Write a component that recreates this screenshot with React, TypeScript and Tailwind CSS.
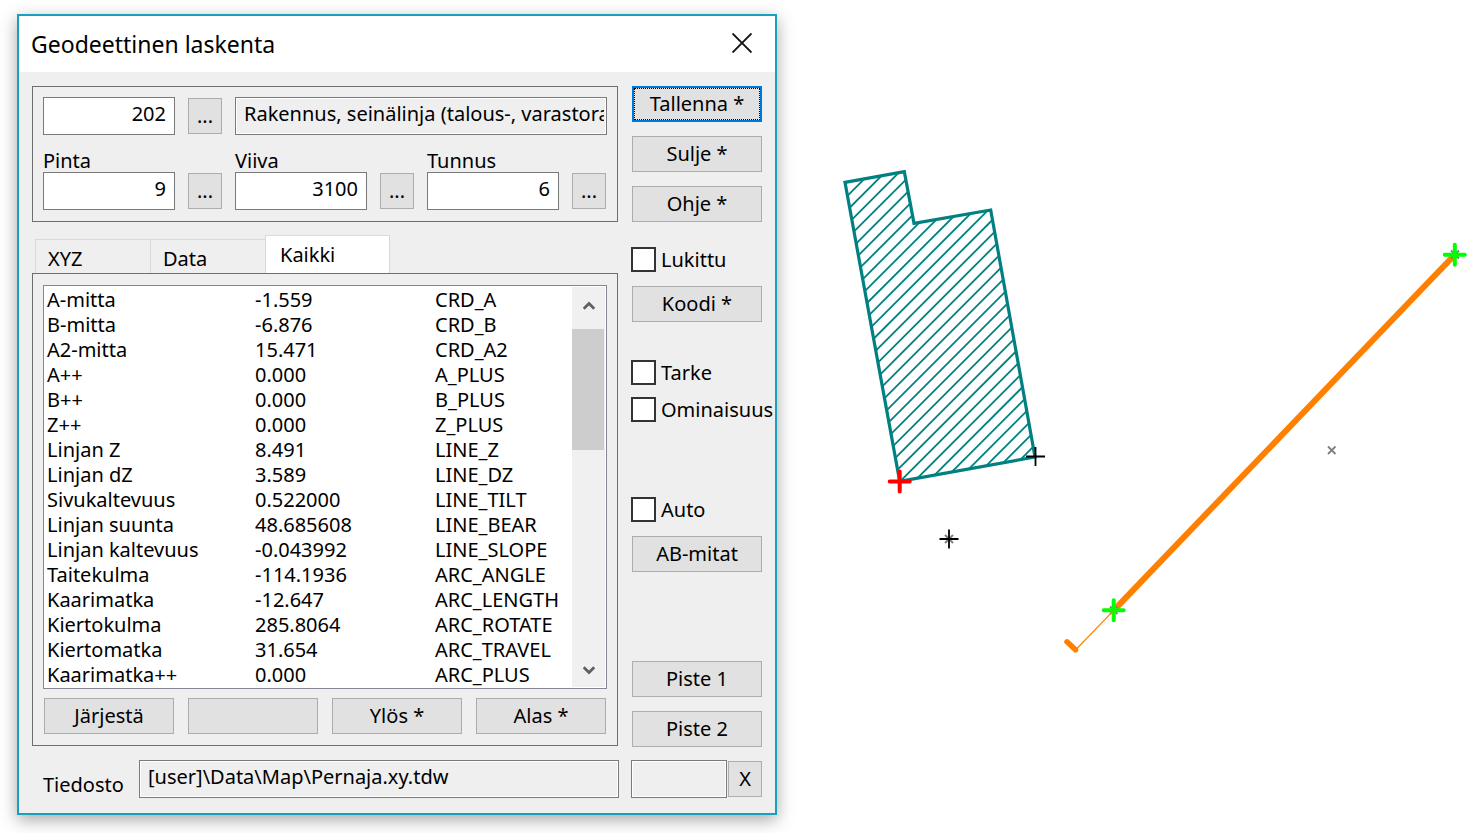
import { useState } from "react";
import type { ReactNode } from "react";

const ROWS: [string, string, string][] = [
  ["A-mitta", "-1.559", "CRD_A"],
  ["B-mitta", "-6.876", "CRD_B"],
  ["A2-mitta", "15.471", "CRD_A2"],
  ["A++", "0.000", "A_PLUS"],
  ["B++", "0.000", "B_PLUS"],
  ["Z++", "0.000", "Z_PLUS"],
  ["Linjan Z", "8.491", "LINE_Z"],
  ["Linjan dZ", "3.589", "LINE_DZ"],
  ["Sivukaltevuus", "0.522000", "LINE_TILT"],
  ["Linjan suunta", "48.685608", "LINE_BEAR"],
  ["Linjan kaltevuus", "-0.043992", "LINE_SLOPE"],
  ["Taitekulma", "-114.1936", "ARC_ANGLE"],
  ["Kaarimatka", "-12.647", "ARC_LENGTH"],
  ["Kiertokulma", "285.8064", "ARC_ROTATE"],
  ["Kiertomatka", "31.654", "ARC_TRAVEL"],
  ["Kaarimatka++", "0.000", "ARC_PLUS"],
];

function PushButton({ children, label, primary }: { children?: ReactNode; label?: string; primary?: boolean }) {
  return (
    <button
      type="button"
      aria-label={label}
      className={
        primary
          ? "h-9 w-full border-2 border-[#0078d7] bg-[#e1e1e1] leading-6 outline-1 -outline-offset-3 outline-dotted outline-black"
          : "h-9 w-full border border-[#adadad] bg-[#e1e1e1] leading-6"
      }
    >
      {children}
    </button>
  );
}

function SmallButton({ children, label }: { children: ReactNode; label: string }) {
  return (
    <button
      type="button"
      aria-label={label}
      className="h-9 w-[34px] shrink-0 border border-[#adadad] bg-[#e1e1e1] leading-6"
    >
      {children}
    </button>
  );
}

function NumberBox({ id, value, label }: { id: string; value: string; label?: string }) {
  return (
    <input
      id={id}
      aria-label={label}
      defaultValue={value}
      className="h-[38px] w-[132px] min-w-0 border border-[#7a7a7a] bg-white px-2 pb-1.5 text-right outline-none"
    />
  );
}

function Field({ id, title, value }: { id: string; title: string; value: string }) {
  return (
    <div>
      <label htmlFor={id} className="block leading-[23px]">
        {title}
      </label>
      <div className="flex items-center gap-[13px]">
        <NumberBox id={id} value={value} />
        <SmallButton label={`${title} valinta`}>...</SmallButton>
      </div>
    </div>
  );
}

function Check({ children }: { children: ReactNode }) {
  return (
    <label className="-ml-px flex h-[25px] items-center gap-[5px] whitespace-nowrap leading-[27px]">
      <input
        type="checkbox"
        className="size-[25px] shrink-0 appearance-none border-2 border-[#333333] bg-white checked:bg-[#333333]"
      />
      {children}
    </label>
  );
}

function Chevron({ down }: { down?: boolean }) {
  return (
    <svg viewBox="0 0 12 9" className="h-[9px] w-3" fill="none" stroke="#606060" strokeWidth="2.8">
      <path d={down ? "M0.7 1.3 6 6.6l5.3-5.3" : "M0.7 7.7 6 2.4l5.3 5.3"} />
    </svg>
  );
}

const HATCH_COUNT = 32;
const BUILDING = "845,182.3 904.3,171.7 914,223.4 990.7,210 1035,457 899.7,481.3";

function MapView() {
  const hatch = Array.from({ length: HATCH_COUNT }, (_, i) => 1043.3 + i * 14.09);
  return (
    <svg viewBox="777 0 703 833" className="block h-auto w-full" fill="none" role="img" aria-label="Kartta">
      <defs>
        <clipPath id="building">
          <polygon points={BUILDING} />
        </clipPath>
      </defs>
      <g clipPath="url(#building)" stroke="#008080" strokeWidth="1.8">
        {hatch.map((c) => (
          <line key={c} x1={c - 500} y1={500} x2={c - 160} y2={160} />
        ))}
      </g>
      <polygon points={BUILDING} stroke="#008080" strokeWidth="3.2" />
      <path d="M899.7 471.5v20M889.7 481.5h20" stroke="#ff0000" strokeWidth="4" strokeLinecap="round" />
      <path d="M1035.5 447v19M1026 456.5h19" stroke="#000" strokeWidth="1.8" />
      <path d="M945 535l8 8m0-8l-8 8" stroke="#808080" strokeWidth="2" />
      <path d="M949 529.5v19M939.5 539h19" stroke="#000" strokeWidth="1.8" />

      <path d="M1328 446.5l7.5 7.5m0-7.5l-7.5 7.5" stroke="#808080" strokeWidth="1.8" />
      <path d="M1113.7 610.3 1455 254.5" stroke="#ff8000" strokeWidth="6" />
      <path d="M1067 641.8l8.5 8" stroke="#ff8000" strokeWidth="5.5" strokeLinecap="round" />
      <path d="M1110 606.5l7.5 7.5m0-7.5l-7.5 7.5M1451 250.5l8 8m0-8l-8 8" stroke="#808080" strokeWidth="1.8" />
      <g stroke="#00ff00" strokeWidth="4" strokeLinecap="round">
        <path d="M1113.7 600.3v20M1103.7 610.3h20" />
        <path d="M1454.8 244.7v20M1444.8 254.7h20" />
      </g>
      <path d="M1113.7 610.3 1076 649.5" stroke="#ff8000" strokeWidth="1.2" />
    </svg>
  );
}

const TABS = ["XYZ", "Data", "Kaikki"];

export default function App() {
  const [tab, setTab] = useState("Kaikki");

  return (
    <div className="flex min-h-screen items-start bg-white font-['Noto_Sans',sans-serif] text-[20px] text-black">
      <main className="mt-3.5 ml-[17px] flex w-[760px] shrink-0 flex-col border-2 border-[#1a9fbd] bg-[#efefef] shadow-[0_5px_16px_rgba(0,0,0,0.35)]">
        <header className="flex h-14 items-center justify-between bg-white pr-[21px] pb-0.5 pl-3">
          <h1 className="pt-0.5 text-[23px] leading-8">Geodeettinen laskenta</h1>
          <button type="button" aria-label="Sulje ikkuna" className="grid size-6 place-items-center">
            <svg viewBox="0 0 20 20" className="size-5" stroke="#111" strokeWidth="1.9">
              <path d="M0.5 0.5l19 19M19.5 0.5l-19 19" />
            </svg>
          </button>
        </header>

        <div className="flex flex-col gap-3.5 px-[13px] pt-3.5 pb-[15px]">
          <div className="flex items-start gap-3.5">
            <div className="flex flex-1 flex-col">
              <section className="border border-[#6e6e6e] px-2.5 pt-2.5 pb-[11px]">
                <div className="flex items-center gap-[13px]">
                  <NumberBox id="laji" value="202" label="Laji" />
                  <SmallButton label="Lajin valinta">...</SmallButton>
                  <input
                    readOnly
                    aria-label="Lajin nimi"
                    value="Rakennus, seinälinja (talous-, varastorakennus)"
                    className="h-[38px] min-w-0 flex-1 border border-[#7a7a7a] bg-[#efefef] pr-0.5 pb-1.5 pl-2 shadow-[inset_0_0_0_1px_#fff] outline-none"
                  />
                </div>
                <div className="mt-3.5 flex gap-[13px]">
                  <Field id="pinta" title="Pinta" value="9" />
                  <Field id="viiva" title="Viiva" value="3100" />
                  <Field id="tunnus" title="Tunnus" value="6" />
                </div>
              </section>

              <div role="tablist" className="mt-[13px] flex items-end pl-[3px]">
                {TABS.map((t) => (
                  <button
                    key={t}
                    type="button"
                    role="tab"
                    aria-selected={t === tab}
                    onClick={() => setTab(t)}
                    className={
                      t === tab
                        ? "h-[38px] w-[125px] border border-b-0 border-[#d9d9d9] bg-white pl-3.5 text-left"
                        : "h-[34px] w-[115px] border border-r-0 border-b-0 border-[#d9d9d9] pt-1 pl-3 text-left"
                    }
                  >
                    {t}
                  </button>
                ))}
              </div>

              <section className="border border-[#6e6e6e] px-2.5 pt-[11px] pb-[11px]">
                <div className="flex border border-[#828790] bg-white p-px">
                  <table className="flex-1 table-fixed self-start">
                    <colgroup>
                      <col className="w-[210px]" />
                      <col className="w-[180px]" />
                      <col />
                    </colgroup>
                    <tbody>
                      {ROWS.map(([name, value, code]) => (
                        <tr key={code} className="h-[25px] leading-[25px]">
                          <td className="py-0 pl-0.5">{name}</td>
                          <td className="p-0">{value}</td>
                          <td className="p-0">{code}</td>
                        </tr>
                      ))}
                    </tbody>
                  </table>
                  <div className="flex w-[33px] flex-col bg-[#f0f0f0]">
                    <div className="grid h-[42px] place-items-center pb-1.5">
                      <Chevron />
                    </div>
                    <div className="h-[121px] w-8 bg-[#cdcdcd]" />
                    <div className="flex-1" />
                    <div className="grid h-[34px] place-items-center">
                      <Chevron down />
                    </div>
                  </div>
                </div>
                <div className="mt-[9px] grid grid-cols-4 gap-3.5 px-px">
                  <PushButton>Järjestä</PushButton>
                  <PushButton label="Tyhjä" />
                  <PushButton>Ylös *</PushButton>
                  <PushButton>Alas *</PushButton>
                </div>
              </section>
            </div>

            <aside className="-mb-px flex w-[130px] flex-col">
              <div className="flex flex-col gap-3.5">
                <PushButton primary>Tallenna *</PushButton>
                <PushButton>Sulje *</PushButton>
                <PushButton>Ohje *</PushButton>
              </div>
              <div className="mt-[25px] flex flex-col gap-3.5">
                <Check>Lukittu</Check>
                <PushButton>Koodi *</PushButton>
              </div>
              <div className="mt-[38px] flex flex-col gap-3">
                <Check>Tarke</Check>
                <Check>Ominaisuus</Check>
              </div>
              <div className="mt-[75px] flex flex-col gap-3.5">
                <Check>Auto</Check>
                <PushButton>AB-mitat</PushButton>
              </div>
              <div className="mt-[89px] flex flex-col gap-3.5">
                <PushButton>Piste 1</PushButton>
                <PushButton>Piste 2</PushButton>
              </div>
            </aside>
          </div>

          <footer className="flex items-center pl-[11px]">
            <label htmlFor="tiedosto" className="w-24 pt-3 leading-6">
              Tiedosto
            </label>
            <input
              id="tiedosto"
              readOnly
              value="[user]\Data\Map\Pernaja.xy.tdw"
              className="h-[38px] min-w-0 flex-1 border border-[#7a7a7a] bg-[#efefef] px-2 pb-1.5 shadow-[inset_0_0_0_1px_#fff] outline-none"
            />
            <input
              readOnly
              aria-label="Tila"
              className="mr-px ml-3 h-[38px] w-24 border border-[#7a7a7a] bg-[#efefef] px-2 shadow-[inset_0_0_0_1px_#fff] outline-none"
            />
            <SmallButton label="Tyhjennä">X</SmallButton>
          </footer>
        </div>
      </main>

      <div className="min-w-0 flex-1">
        <MapView />
      </div>
    </div>
  );
}
